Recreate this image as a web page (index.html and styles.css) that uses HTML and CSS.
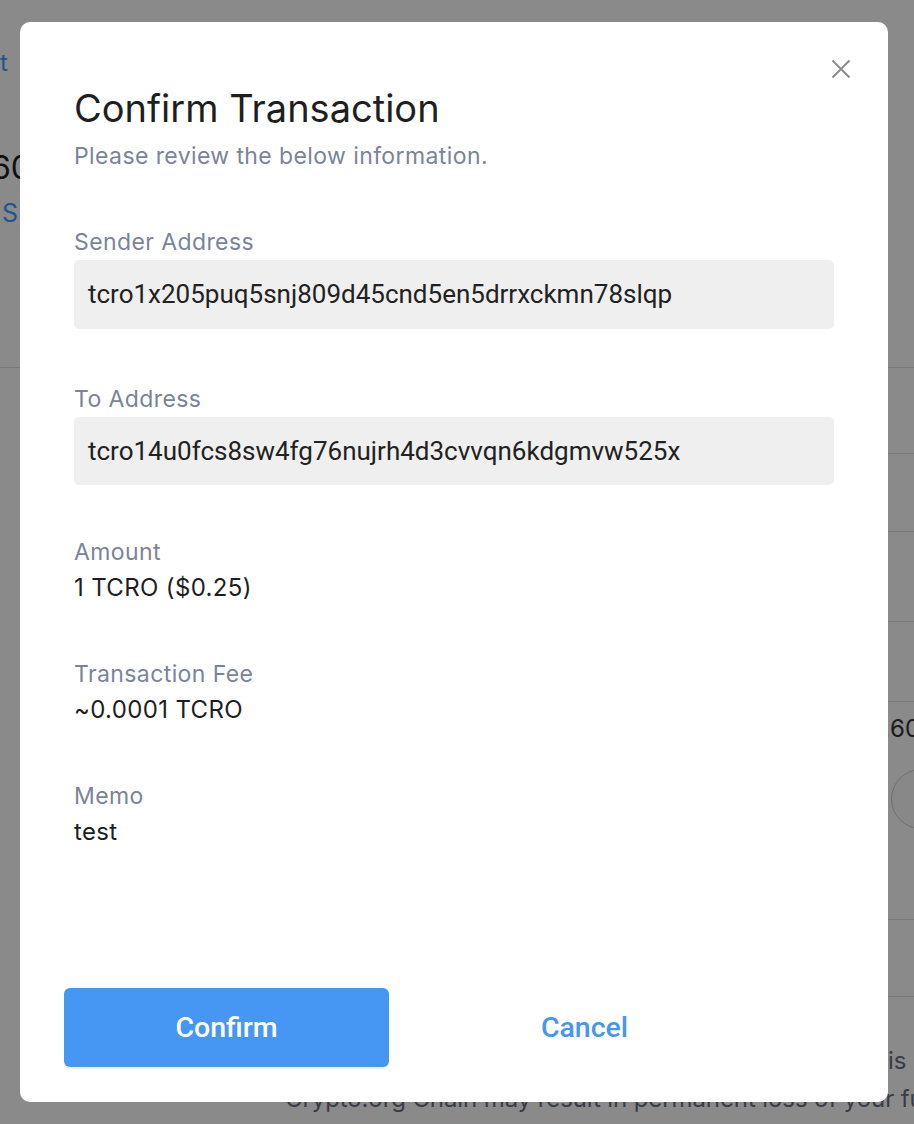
FILE: index.html
```html
<!DOCTYPE html>
<html lang="en">
<head>
<meta charset="utf-8">
<title>Confirm Transaction</title>
<link rel="stylesheet" href="styles.css">
</head>
<body>
<div class="page">
  <div class="page-top">
    <div class="line link"><span class="lead lead-back">‹ Back to Accoun</span><span>t</span></div>
    <div class="line balance"><span class="lead lead-bal">1,000.</span><span>60 TCRO</span></div>
    <div class="line link sub"><span class="lead lead-sub"></span><span>SEND</span></div>
  </div>
  <div class="page-rule"></div>
  <div class="page-rows">
    <div class="row r1"></div>
    <div class="row r2"></div>
    <div class="row r3"></div>
    <div class="row r4"></div>
    <div class="row r5">
      <div class="line row-amt"><span class="lead lead-amt">Available: 1,000.</span><span>60 TCRO</span></div>
      <div class="row-ctrl"><span class="lead lead-ctrl"></span><span class="row-circle"></span></div>
    </div>
    <div class="row r6"></div>
  </div>
  <div class="page-note">
    <div class="line note"><span class="lead lead-note">Sending funds to an address that</span><span>is not on</span></div>
    <div class="line note second">Crypto.org Chain may result in permanent loss of your funds.</div>
  </div>
</div>

<div class="overlay"></div>

<div class="modal" role="dialog" aria-labelledby="modal-title">
  <button class="close" aria-label="Close">
    <svg width="20" height="20" viewBox="0 0 20 20"><path d="M1.5 1.5 L18.5 18.5 M18.5 1.5 L1.5 18.5" stroke="#8c8c8c" stroke-width="2" fill="none"/></svg>
  </button>
  <h1 id="modal-title" class="title">Confirm Transaction</h1>
  <p class="subtitle">Please review the below information.</p>

  <div class="field boxed first">
    <div class="label">Sender Address</div>
    <div class="box">tcro1x205puq5snj809d45cnd5en5drrxckmn78slqp</div>
  </div>
  <div class="field boxed">
    <div class="label">To Address</div>
    <div class="box">tcro14u0fcs8sw4fg76nujrh4d3cvvqn6kdgmvw525x</div>
  </div>
  <div class="field after-box">
    <div class="label">Amount</div>
    <div class="value">1 TCRO ($0.25)</div>
  </div>
  <div class="field plain">
    <div class="label">Transaction Fee</div>
    <div class="value">~0.0001 TCRO</div>
  </div>
  <div class="field plain">
    <div class="label">Memo</div>
    <div class="value">test</div>
  </div>

  <div class="actions">
    <button class="btn btn-primary">Confirm</button>
    <button class="btn btn-link">Cancel</button>
  </div>
</div>
</body>
</html>
```

FILE: styles.css
```css
* { box-sizing: border-box; }
html, body { margin: 0; padding: 0; }
body {
  width: 914px;
  height: 1124px;
  overflow: hidden;
  background: #fff;
  font-family: Inter, "Noto Sans", sans-serif;
}

/* ---------- underlying page (dimmed) ---------- */
.page { width: 914px; height: 1124px; display: flex; flex-direction: column; }
.line { display: flex; white-space: nowrap; }
.lead { display: flex; justify-content: flex-end; flex: none; }

.page-top { display: flex; flex-direction: column; margin-left: -14px; padding-top: 48px; }
.link { color: #3d9cff; font-size: 24px; line-height: 30px; }
.lead-back { width: 14px; }
.balance { margin-top: 70px; font-size: 32px; line-height: 40px; color: #1f1f1f; }
.lead-bal { width: 5px; }
.sub { margin-top: 10px; font-size: 25px; }
.lead-sub { width: 16px; }

.page-rule { margin-top: 139px; height: 1px; background: #dedede; }
.page-rows { display: flex; flex-direction: column; margin-left: 300px; }
.row { border-bottom: 1px solid #dedede; }
.r1 { height: 86px; }
.r2 { height: 78px; }
.r3 { height: 90px; }
.r4 { height: 80px; }
.r5 { height: 218px; padding-top: 12px; }
.r6 { height: 77px; }
.row-amt { font-size: 24px; line-height: 30px; color: #333; }
.lead-amt { width: 590px; }
.row-ctrl { display: flex; margin-top: 25px; }
.lead-ctrl { width: 591px; }
.row-circle {
  flex: none;
  width: 60px;
  height: 60px;
  border-radius: 50%;
  border: 1px solid #d0d0d0;
  background: #fbfbfb;
}

.page-note { display: flex; flex-direction: column; margin-top: 45px; }
.note { font-size: 24px; line-height: 38px; color: #6b7080; }
.lead-note { width: 888px; }
.note.second { padding-left: 285px; letter-spacing: -0.1px; }

.overlay {
  position: fixed;
  inset: 0;
  background: rgba(0, 0, 0, 0.46);
}

/* ---------- modal ---------- */
.modal {
  position: fixed;
  top: 22px;
  left: 20px;
  width: 868px;
  height: 1080px;
  background: #fff;
  border-radius: 10px;
  padding: 62px 54px 35px 54px;
  display: flex;
  flex-direction: column;
}
.close {
  position: absolute;
  top: 37px;
  right: 37px;
  width: 20px;
  height: 20px;
  padding: 0;
  border: none;
  background: none;
  display: block;
  cursor: pointer;
}
.close svg { display: block; }
.title {
  margin: 0;
  font-size: 38px;
  line-height: 48px;
  font-weight: 400;
  color: #1f1f1f;
}
.subtitle {
  margin: 10px 0 0;
  font-size: 23px;
  line-height: 28px;
  letter-spacing: 0.4px;
  color: #7b8499;
}
.field { display: flex; flex-direction: column; margin-top: 56px; }
.field.first { margin-top: 58px; }
.field.after-box { margin-top: 53px; }
.field.plain { margin-top: 58px; }
.label {
  font-size: 23px;
  line-height: 28px;
  letter-spacing: 0.4px;
  color: #7b8499;
}
.box {
  margin-top: 4px;
  height: 68.5px;
  background: #efefef;
  border-radius: 5px;
  padding: 0 14px;
  display: flex;
  align-items: center;
  font-family: Roboto, sans-serif;
  font-size: 26px;
  color: #222;
}
.value {
  margin-top: 8px;
  font-size: 24px;
  line-height: 28px;
  letter-spacing: 0.35px;
  color: #1e1e1e;
}
.actions {
  margin-top: auto;
  margin-left: -10px;
  display: flex;
  gap: 33px;
}
.btn {
  width: 325px;
  height: 79px;
  border: none;
  border-radius: 6px;
  font-family: Roboto, sans-serif;
  font-size: 28.5px;
  font-weight: 500;
  cursor: pointer;
}
.btn-primary {
  background: #4597f3;
  color: #fff;
  box-shadow: 0 2px 0 rgba(0, 0, 0, 0.05);
}
.btn-link {
  background: transparent;
  color: #4597f3;
}
```
